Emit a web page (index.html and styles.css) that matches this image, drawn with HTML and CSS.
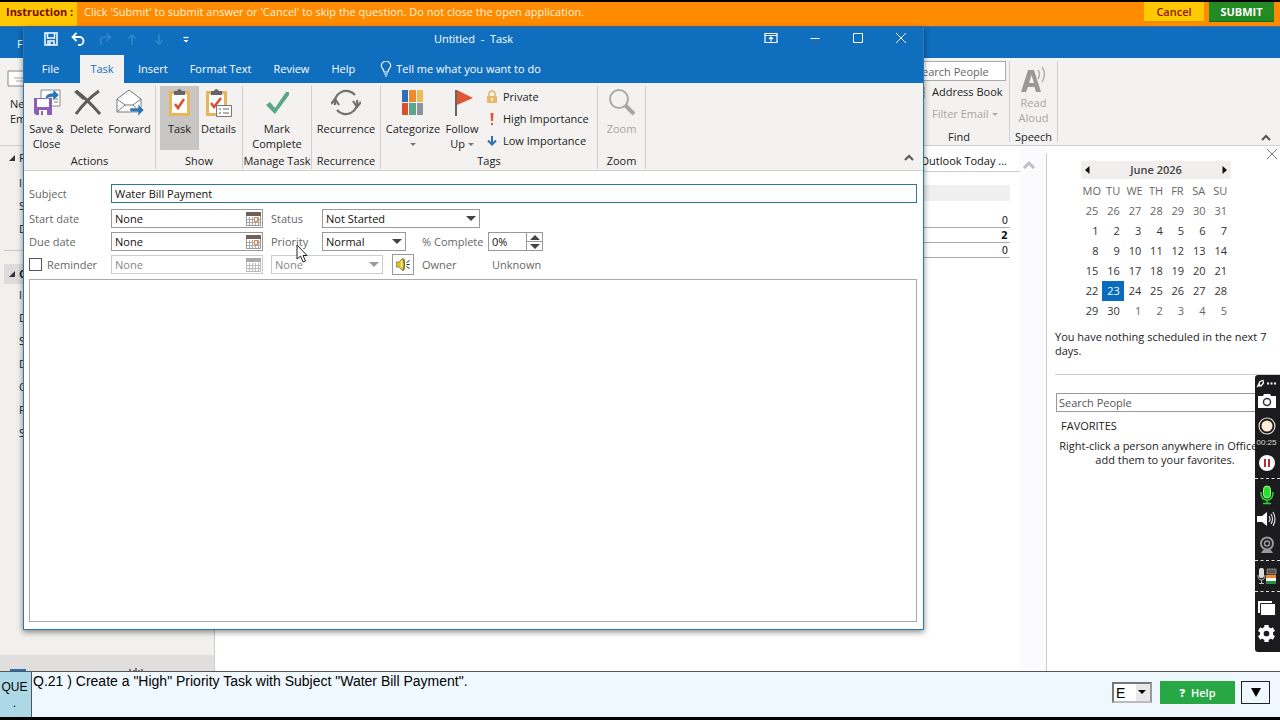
FILE: index.html
```html
<!DOCTYPE html>
<html lang="en">
<head>
<meta charset="utf-8">
<title>Untitled - Task</title>
<link rel="stylesheet" href="styles.css">
</head>
<body>
<header class="exam-bar">
  <strong class="exam-label">Instruction :</strong>
  <span class="exam-text">Click 'Submit' to submit answer or 'Cancel' to skip the question. Do not close the open application.</span>
  <button class="exam-cancel">Cancel</button>
  <button class="exam-submit">SUBMIT</button>
</header>

<main class="stage">
  <div class="outlook">
    <div class="outlook-title"><span>F</span></div>
    <div class="outlook-ribbon">
      <div class="new-mail">
        <svg width="22" height="18" viewBox="0 0 22 18"><path d="M1 1h21v15H1z" fill="#fff" stroke="#888"/><path d="M7 8h12M9 11h10" stroke="#aaa"/></svg>
        <span>Ne</span><span>Em</span>
      </div>
      <div class="find-group">
        <input class="people-box" type="text" aria-label="Find people" value="earch People">
        <button class="find-line"><svg width="12" height="12" viewBox="0 0 12 12"><path d="M-3 0h8v12H-3z" fill="#fff" stroke="#777"/><path d="M-2 3h6M-2 6h6M-2 9h6" stroke="#777"/><path d="M6.500 1v3" stroke="#d24726" stroke-width="2"/><path d="M6.500 5v3" stroke="#2b8a5a" stroke-width="2"/><path d="M6.500 9v3" stroke="#2b6cb5" stroke-width="2"/></svg>Address Book</button>
        <button class="find-line dim"><svg width="12" height="12" viewBox="0 0 12 12"><path d="M-4 1h10L2 6v6H0V6z" fill="#a8a8a8"/></svg>Filter Email<i class="caret"></i></button>
        <span class="group-name">Find</span>
      </div>
      <div class="speech-group">
        <svg width="30" height="32" viewBox="0 0 30 32"><path fill-rule="evenodd" d="M2 29 9 7h6l7 22h-5l-1.500-5H9l-2 5zM10 20h5L12.500 12z" fill="#999"/><path d="M19 7q3 4 0 9M23 4q5 7 0 15" fill="none" stroke="#b0b0b0" stroke-width="1.500"/></svg>
        <span class="dim">Read<br>Aloud</span>
        <span class="group-name">Speech</span>
      </div>
      <button class="collapse" aria-label="Collapse ribbon"><svg width="10" height="8" viewBox="0 0 10 8"><path d="M1 6l4-4 4 4" fill="none" stroke="#555" stroke-width="2"/></svg></button>
    </div>
    <div class="outlook-body">
      <nav class="folders">
        <div class="folder-head"><svg width="6" height="6" viewBox="0 0 6 6"><path d="M6 0v6H0z" fill="#333"/></svg>F</div>
        <ul><li>I</li><li>S</li><li>D</li></ul>
        <hr>
        <div class="folder-head picked"><svg width="6" height="6" viewBox="0 0 6 6"><path d="M6 0v6H0z" fill="#333"/></svg><b>C</b></div>
        <ul><li>I</li><li>D</li><li>S</li><li>D</li><li>C</li><li>R</li><li>S</li></ul>
        <div class="folder-foot">
          <svg width="16" height="3" viewBox="0 0 16 3"><path d="M0 3V1h16v2z" fill="#2b6cb5"/></svg>
          <svg width="14" height="3" viewBox="0 0 14 3"><path d="M1 3V1M5 3V2M7 3V0M10 3V2M13 3V1" stroke="#555" stroke-width="1.500"/></svg>
        </div>
      </nav>
      <section class="today">
        <div class="today-head">e Outlook Today ...</div>
        <div class="today-band"></div>
        <ol><li>0</li><li><b>2</b></li><li>0</li></ol>
      </section>
      <div class="scroll"><svg width="14" height="10" viewBox="0 0 14 10"><path d="M2 8l5-5 5 5" fill="none" stroke="#c0c0c0" stroke-width="3"/></svg></div>
      <aside class="todo">
        <button class="todo-close" aria-label="Close"><svg width="10" height="10" viewBox="0 0 10 10"><path d="M0 0l10 10M10 0L0 10" stroke="#777"/></svg></button>
        <div class="month">
          <button aria-label="Previous month"><svg width="5" height="8" viewBox="0 0 5 8"><path d="M4.500 0v8L0 4z" fill="#111"/></svg></button>
          <span>June 2026</span>
          <button aria-label="Next month"><svg width="5" height="8" viewBox="0 0 5 8"><path d="M.5 0v8L5 4z" fill="#111"/></svg></button>
        </div>
        <table class="days">
          <thead><tr><th>MO</th><th>TU</th><th>WE</th><th>TH</th><th>FR</th><th>SA</th><th>SU</th></tr></thead>
          <tbody>
            <tr class="off"><td>25</td><td>26</td><td>27</td><td>28</td><td>29</td><td>30</td><td>31</td></tr>
            <tr><td>1</td><td>2</td><td>3</td><td>4</td><td>5</td><td>6</td><td>7</td></tr>
            <tr><td>8</td><td>9</td><td>10</td><td>11</td><td>12</td><td>13</td><td>14</td></tr>
            <tr><td>15</td><td>16</td><td>17</td><td>18</td><td>19</td><td>20</td><td>21</td></tr>
            <tr><td>22</td><td class="now">23</td><td>24</td><td>25</td><td>26</td><td>27</td><td>28</td></tr>
            <tr><td>29</td><td>30</td><td class="off">1</td><td class="off">2</td><td class="off">3</td><td class="off">4</td><td class="off">5</td></tr>
          </tbody>
        </table>
        <p class="agenda">You have nothing scheduled in the next 7 days.</p>
        <div class="people">
          <input type="text" placeholder="Search People" aria-label="Search People">
          <h2>FAVORITES</h2>
          <p>Right-click a person anywhere in Office to<br>add them to your favorites.</p>
        </div>
      </aside>
    </div>
  </div>

  <section class="window">
    <div class="title-bar">
      <div class="quick">
        <button aria-label="Save"><svg width="14" height="14" viewBox="0 0 14 14"><path d="M1 1h12v12H1zM3.500 1v5h7V1M4 13V9h6v4M6 10v3" fill="none" stroke="#fff" stroke-width="1.500"/></svg></button>
        <button aria-label="Undo"><svg width="14" height="14" viewBox="0 0 14 14"><path d="M5.500 1L1.500 5l4 4M2 5h6.500a4 4 0 0 1 0 8H7" fill="none" stroke="#fff" stroke-width="1.800"/></svg></button>
        <button aria-label="Redo"><svg width="14" height="14" viewBox="0 0 14 14"><path d="M8.500 1l4 4-4 4M12 5H5.500a4 4 0 0 0-1 7.500" fill="none" stroke="#3585cf" stroke-width="1.500"/></svg></button>
        <button aria-label="Previous item"><svg width="14" height="14" viewBox="0 0 14 14"><path d="M7 13V3M3.500 6.500L7 3l3.500 3.500" fill="none" stroke="#3585cf" stroke-width="1.500"/></svg></button>
        <button aria-label="Next item"><svg width="14" height="14" viewBox="0 0 14 14"><path d="M7 2v10M3.500 8.500L7 12l3.500-3.500" fill="none" stroke="#3585cf" stroke-width="1.500"/></svg></button>
        <button aria-label="Customize"><svg width="14" height="14" viewBox="0 0 14 14"><path d="M4.500 5.500h5" stroke="#fff" stroke-width="1.200"/><path d="M4.500 8h5L7 10.500z" fill="#fff"/></svg></button>
      </div>
      <h1>Untitled&nbsp; -&nbsp; Task</h1>
      <div class="sys">
        <button aria-label="Ribbon options"><svg width="14" height="12" viewBox="0 0 14 12"><path d="M1 1.500h12v9H1zM1 3.500h12M7 9.500V5M5 7l2-2 2 2" fill="none" stroke="#fff" stroke-width="1.200"/></svg></button>
        <button aria-label="Minimize"><svg width="12" height="12" viewBox="0 0 12 12"><path d="M1.500 6.500h9" stroke="#fff"/></svg></button>
        <button aria-label="Maximize"><svg width="12" height="12" viewBox="0 0 12 12"><path d="M1.500 1.500h9v9h-9z" fill="none" stroke="#fff"/></svg></button>
        <button aria-label="Close window"><svg width="12" height="12" viewBox="0 0 12 12"><path d="M1 1l10 10M11 1L1 11" stroke="#fff"/></svg></button>
      </div>
    </div>
    <nav class="tabs">
      <button class="tab-file">File</button><button class="active">Task</button><button>Insert</button><button>Format Text</button><button>Review</button><button>Help</button>
      <button class="tell"><svg width="12" height="16" viewBox="0 0 12 16"><path d="M4 11Q4 9 2.500 7.500a4.500 4.500 0 1 1 7 0Q8 9 8 11zM4 13h4M5 15h2" fill="none" stroke="#fff" stroke-width="1.100"/></svg>Tell me what you want to do</button>
    </nav>
    <div class="ribbon">
      <div class="group g-actions"><div class="cmds">
        <button><svg width="30" height="30" viewBox="-1 0 30 30"><path d="M8 2h19v16H8z" fill="#fff" stroke="#888"/><path d="M21 8h4M21 11h4M21 14h4" stroke="#777"/><path d="M1 10h18v17H3l-2-2z" fill="#8a5fb5"/><path d="M4 11h12v8H4zM6 22h8v5H6z" fill="#fff"/><path d="M8 23h2v4H8z" fill="#8a5fb5"/><path d="M12 12q0-7 8-7V1l6 6-6 6V9q-5 0-8 3z" fill="#2e75b6" stroke="#fff" stroke-width=".5"/></svg>Save &amp;<br>Close</button>
        <button><svg width="30" height="30" viewBox="0 0 30 30"><path d="M4 3q10 7 24 23M27 3Q14 12 4 26" fill="none" stroke="#5d5d5d" stroke-width="3"/><path d="M2 4l3-2 8 8-2 2z" fill="#5d5d5d"/></svg>Delete</button>
        <button><svg width="30" height="30" viewBox="0 0 30 30"><path d="M2 11L14 2l12 9v13H2z" fill="#fff" stroke="#777"/><path d="M2 11l8 6h8l8-6M2 24l8-7M18 17l8 7" fill="none" stroke="#777"/><path d="M15 20h8v-4l6 6-6 6v-4h-8z" fill="#2e75b6" stroke="#f3f2f1" stroke-width=".6"/></svg>Forward</button>
      </div><span>Actions</span></div>
      <div class="group g-show"><div class="cmds">
        <button class="pressed"><svg width="30" height="30" viewBox="1 0 30 30"><path d="M6.500 4.500h18v22h-18z" fill="#fff" stroke="#e8b65a" stroke-width="3"/><path d="M10 3h3q2-4 5 0h3v4H10z" fill="#666"/><path d="M11 16l3 4 6-9" fill="none" stroke="#d9512c" stroke-width="2.500"/></svg>Task</button>
        <button><svg width="30" height="30" viewBox="1 0 30 30"><path d="M4.500 4.500h18v22h-18z" fill="#fff" stroke="#e8b65a" stroke-width="3"/><path d="M8 3h3q2-4 5 0h3v4H8z" fill="#666"/><path d="M8 15l3 4 7-9" fill="none" stroke="#d9512c" stroke-width="2.500"/><path d="M13.500 17.500h15v11h-15z" fill="#fff" stroke="#777"/><path d="M16 21h2M20 21h6M16 25h2M20 25h6" stroke="#666"/></svg>Details</button>
      </div><span>Show</span></div>
      <div class="group g-manage"><div class="cmds">
        <button><svg width="30" height="30" viewBox="0 0 30 30"><path d="M4 17l4-3 5 6L24 4h3v3L13 26z" fill="#5ba58b"/></svg>Mark<br>Complete</button>
      </div><span>Manage Task</span></div>
      <div class="group g-recur"><div class="cmds">
        <button><svg width="30" height="30" viewBox="0 0 30 30"><path d="M4 17A11.500 11.500 0 0 1 24 7M26 12A11.500 11.500 0 0 1 6 22" fill="none" stroke="#707070" stroke-width="2.200"/><path d="M0 16l4-5 4 6M30 14l-4 5-4-6" fill="none" stroke="#707070" stroke-width="2.200"/></svg>Recurrence</button>
      </div><span>Recurrence</span></div>
      <div class="group g-tags"><div class="cmds">
        <button><svg width="30" height="30" viewBox="1 0 30 30"><path d="M5 2h6v12H5z" fill="#2e6fb5"/><path d="M12 2h7v12h-7z" fill="#ec8a2d"/><path d="M20 2h6v12h-6z" fill="#edbc57"/><path d="M5 15h6v12H5z" fill="#d9512c"/><path d="M12 15h7v12h-7z" fill="#5ba58b"/><path d="M20 15h6v12h-6z" fill="#8b949c"/></svg>Categorize<br><i class="caret"></i></button>
        <button><svg width="30" height="30" viewBox="0 0 30 30"><path d="M9 2v26" stroke="#666" stroke-width="2"/><path d="M10 2l16 8-16 7z" fill="#de5633"/></svg>Follow<br>Up <i class="caret"></i></button>
        <div class="tag-list">
          <button><svg width="12" height="14" viewBox="0 0 12 14"><path d="M3 6V4q0-3 3-3t3 3v2" fill="none" stroke="#e3c080" stroke-width="1.800"/><path d="M1 6h10v7H1z" fill="#e8b966"/><path d="M6 8v3" stroke="#fff" stroke-width="1.500"/></svg>Private</button>
          <button><svg width="12" height="14" viewBox="0 0 12 14"><path d="M4.500 1h3L7 9H5zM5 11h2v2H5z" fill="#de5633"/></svg>High Importance</button>
          <button><svg width="12" height="14" viewBox="0 0 12 14"><path d="M6 2v8M2 6.500l4 4 4-4" fill="none" stroke="#2e6fb5" stroke-width="2"/></svg>Low Importance</button>
        </div>
      </div><span>Tags</span></div>
      <div class="group g-zoom"><div class="cmds">
        <button class="dim"><svg width="30" height="30" viewBox="0 0 30 30"><circle cx="12" cy="11" r="9" fill="none" stroke="#aaa" stroke-width="2"/><path d="M18 17l9 9" stroke="#a5a5a5" stroke-width="4"/></svg>Zoom</button>
      </div><span>Zoom</span></div>
      <button class="collapse" aria-label="Collapse ribbon"><svg width="10" height="8" viewBox="0 0 10 8"><path d="M1 6l4-4 4 4" fill="none" stroke="#555" stroke-width="2"/></svg></button>
    </div>
    <form class="task-form">
      <div class="row">
        <label class="lead" for="subject">Subject</label>
        <div class="subject"><input id="subject" type="text" value="Water Bill Payment"></div>
      </div>
      <div class="row">
        <label class="lead" for="start">Start date</label>
        <div class="date"><input id="start" type="text" value="None"><svg width="15" height="14" viewBox="0 0 15 14"><path d="M.5.5h14v13H.5z" fill="#fff" stroke="#999"/><path d="M0 0h15v4H0z" fill="#705f5a"/><path d="M3.500 5v8M6.500 5v8M9.500 5v8M12.500 5v8M1 7.500h13M1 10.500h13" stroke="#aaa"/><path d="M8.500 5.500h3v4h-3z" fill="#fff" stroke="#d98040"/></svg></div>
        <label class="mid" for="status">Status</label>
        <div class="pick w-status"><select id="status"><option>Not Started</option></select></div>
      </div>
      <div class="row">
        <label class="lead" for="due">Due date</label>
        <div class="date"><input id="due" type="text" value="None"><svg width="15" height="14" viewBox="0 0 15 14"><path d="M.5.5h14v13H.5z" fill="#fff" stroke="#999"/><path d="M0 0h15v4H0z" fill="#705f5a"/><path d="M3.500 5v8M6.500 5v8M9.500 5v8M12.500 5v8M1 7.500h13M1 10.500h13" stroke="#aaa"/><path d="M8.500 5.500h3v4h-3z" fill="#fff" stroke="#d98040"/></svg></div>
        <label class="mid" for="priority">Priority</label>
        <div class="pick w-priority"><select id="priority"><option>Normal</option></select></div>
        <label class="percent" for="complete">% Complete</label>
        <div class="spin"><input id="complete" type="text" value="0%"><div><button type="button" aria-label="Increase"><svg width="10" height="5" viewBox="0 0 10 5"><path d="M0 5h10L5 0z" fill="#444"/></svg></button><button type="button" aria-label="Decrease"><svg width="10" height="5" viewBox="0 0 10 5"><path d="M0 0h10L5 5z" fill="#444"/></svg></button></div></div>
      </div>
      <div class="row">
        <label class="lead remind"><input type="checkbox">Reminder</label>
        <div class="date faded"><input type="text" value="None" aria-label="Reminder date" disabled><svg width="15" height="14" viewBox="0 0 15 14"><path d="M.5.5h14v13H.5z" fill="#fff" stroke="#bbb"/><path d="M0 0h15v4H0z" fill="#aaa"/><path d="M3.500 5v8M6.500 5v8M9.500 5v8M12.500 5v8M1 7.500h13M1 10.500h13" stroke="#bbb"/></svg></div>
        <div class="pick w-time faded"><select aria-label="Reminder time" disabled><option>None</option></select></div>
        <button type="button" class="sound" aria-label="Reminder sound"><svg width="14" height="13" viewBox="0 0 14 13"><path d="M0 4h3l4-4q3 6 0 13L3 9H0z" fill="#d6c02e" stroke="#8a7a2a" stroke-width=".8"/><path d="M5.500 3v7" stroke="#f6ec9a" stroke-width="1.500"/><path d="M8 1q1 5 0 11" fill="none" stroke="#675b18"/><path d="M10.500 6.500h3M10.500 4.500l3-2M10.500 8.500l3 2" stroke="#222"/></svg></button>
        <span class="owner">Owner</span><span>Unknown</span>
      </div>
      <textarea aria-label="Task notes"></textarea>
    </form>
  </section>

  <svg class="cursor" width="12" height="19" viewBox="0 0 12 19"><path d="M1 1v14l3.500-3 2.500 6 2.500-1L7 11.500h4z" fill="#fff" stroke="#222"/></svg>

  <aside class="recorder">
    <svg width="21" height="9" viewBox="0 0 21 9"><path d="M2 6.500l2-4 3-1 .5 2.500-2.500 3zM1 8l3-3" fill="none" stroke="#fff" stroke-width="1.300"/><path d="M11 4.500h2M14.500 4.500h2M18 4.500h2" stroke="#fff" stroke-width="2"/></svg>
    <svg width="20" height="16" viewBox="0 0 20 16"><path d="M1 3h5l1-2h6l1 2h5v12H1z" fill="#fff"/><circle cx="10" cy="9" r="3.500" fill="#fff" stroke="#333" stroke-width="1.500"/></svg>
    <svg class="rec" width="18" height="18" viewBox="0 0 18 18"><circle cx="9" cy="9" r="8" fill="none" stroke="#e9ddd0" stroke-width="1.200"/><circle cx="9" cy="9" r="5.500" fill="#ffeed9"/></svg>
    <span>00:25</span>
    <svg class="pause" width="16" height="16" viewBox="0 0 16 16"><circle cx="8" cy="8" r="8" fill="#fff"/><path d="M6 4v8M10 4v8" stroke="#b52d3c" stroke-width="2"/></svg>
    <hr>
    <svg class="mic" width="16" height="20" viewBox="0 0 16 20"><rect x="4.500" y="1" width="7" height="12" rx="3.500" fill="#28e02c" stroke="#a9ff9e"/><path d="M2 7q0 8 6 8t6-8M8 15v3M4 18.500h8" fill="none" stroke="#28d62c" stroke-width="1.500"/></svg>
    <svg class="spk" width="19" height="16" viewBox="0 0 19 16"><path d="M0 5h5l5-4v14l-5-4H0z" fill="#fff"/><path d="M12 5q2 3 0 6M14 3q3 5 0 10M16 1q4 7 0 14" fill="none" stroke="#ddd" stroke-width="1.200"/></svg>
    <svg class="cam" width="16" height="18" viewBox="0 0 16 18"><circle cx="8" cy="7.500" r="6" fill="none" stroke="#999" stroke-width="2"/><circle cx="8" cy="7.500" r="2.500" fill="none" stroke="#999" stroke-width="1.500"/><path d="M4 14h8l2 3H2z" fill="#999"/></svg>
    <hr>
    <svg class="lang" width="20" height="16" viewBox="0 0 20 16"><rect x="2" y="0" width="5" height="10" rx="2" fill="#ddd"/><path d="M1 7q0 5 3.500 5T8 7M4.500 12v3M2 15.500h5" fill="none" stroke="#bbb"/><path d="M10 1h9v5h-9z" fill="#555" stroke="#aaa" stroke-width=".7"/><path d="M9 7h10v3H9z" fill="#f28c28"/><path d="M9 10h10v3H9z" fill="#fff"/><path d="M9 13h10v3H9z" fill="#27943a"/></svg>
    <hr>
    <svg class="copies" width="19" height="16" viewBox="0 0 19 16"><path d="M1 1h14v12H1z" fill="#fff"/><path d="M3.500 3.500h15v12h-15z" fill="#fff" stroke="#222"/></svg>
    <svg width="19" height="19" viewBox="0 0 20 20"><circle cx="10" cy="10" r="5" fill="none" stroke="#fff" stroke-width="4"/><path d="M10 1v4M10 15v4M2.200 5.500l3.500 2M14.300 12.500l3.500 2M2.200 14.500l3.500-2M14.300 7.500l3.500-2" stroke="#fff" stroke-width="4.500"/></svg>
  </aside>
</main>

<footer class="question">
  <div class="que">QUE<br>.</div>
  <p>Q.21 ) Create a "High" Priority Task with Subject "Water Bill Payment".</p>
  <div class="lang-pick"><select aria-label="Language"><option>E</option></select></div>
  <button class="help"><b>?</b>Help</button>
  <button class="drop" aria-label="Collapse question"><svg width="10" height="9" viewBox="0 0 10 9"><path d="M0 0h10L5 9z" fill="#000"/></svg></button>
</footer>
</body>
</html>
```
FILE: styles.css
```css
* { box-sizing: border-box; margin: 0; }
body {
  display: flex; flex-direction: column; min-height: 100vh;
  border-top: 2px solid #000; border-bottom: 3px solid #000;
  font: 11px/14px "Open Sans", "Noto Sans", sans-serif; color: #222;
}
button { border: 0; padding: 0; background: none; font: inherit; color: inherit; }
input, select, textarea { font: inherit; color: inherit; border-radius: 0; }
svg { display: block; flex: none; }
ul, ol { list-style: none; padding: 0; }
.dim { color: #a6a6a6; }
.caret { display: inline-block; border: 3px solid transparent; border-top-color: #777; border-bottom: 0; vertical-align: 2px; }

/* Exam bar */
.exam-bar { display: flex; height: 24px; background: #ff8c00; color: #fff1dc; }
.exam-label { width: 77px; padding: 3px 0 0 6px; background: #ffc800; color: #7b0a0a; }
.exam-text { flex: 1; padding: 3px 0 0 7px; }
.exam-cancel { width: 60px; height: 20px; background: #ffc800; color: #8b1a0a; font-weight: 600; border-bottom: 1px solid #d39a00; }
.exam-submit { width: 65px; height: 20px; margin: 0 6px 0 5px; background: #228b22; color: #fff; font-weight: 700; border-bottom: 1px solid #14661a; }

.stage { position: relative; flex: 1; display: flex; flex-direction: column; }

/* Outlook behind the task window */
.outlook { flex: 1; display: flex; flex-direction: column; }
.outlook-title { height: 32px; padding: 10px 0 0 17px; background: #106ebe; border-top: 1px solid #57688a; color: #fff; }
.outlook-ribbon { display: flex; justify-content: flex-end; height: 88px; background: #f3f2f1; border-bottom: 1px solid #d2d0ce; }
.new-mail { display: flex; flex-direction: column; gap: 1px; width: 32px; padding: 12px 0 0 7px; margin-right: auto; }
.new-mail svg { margin-bottom: 8px; }
.new-mail span { padding-left: 3px; }
.find-group { width: 92px; display: flex; flex-direction: column; }
.people-box { width: 89px; height: 20px; margin-top: 3px; padding: 0 4px; border: 1px solid #aaa; color: #666; }
.find-line { display: flex; align-items: center; gap: 3px; height: 22px; color: #222; white-space: nowrap; }
.find-line.dim { color: #a6a6a6; }
.find-line .caret { border-top-color: #aaa; }
.group-name { margin-top: auto; padding-bottom: 1px; text-align: center; color: #222; }
.find-group .group-name { padding: 0 14px 1px 6px; }
.speech-group { width: 49px; margin: 3px 0; border: solid #d2d0ce; border-width: 0 1px; display: flex; flex-direction: column; align-items: center; line-height: 15px; text-align: center; }
.speech-group svg { margin-top: 2px; }
.speech-group .group-name { margin-bottom: -3px; }
.outlook-ribbon .collapse { width: 221px; padding: 73px 9px 0 0; margin-left: 1px; }
.collapse svg { margin-left: auto; }
.outlook-body { flex: 1; display: flex; }
.folders { width: 215px; background: #f1f0ed; border-right: 1px solid #ccc; display: flex; flex-direction: column; line-height: 22px; }
.folders li { height: 23px; padding-left: 19px; }
.folders hr { margin: 9px 4px 13px; border: 0; border-top: 1px solid #ccc; }
.folder-head { display: flex; align-items: center; gap: 4px; height: 20px; padding-left: 9px; margin-top: 2px; }
.folder-head + ul { margin-top: 4px; }
.picked { margin: 0 4px; padding-left: 5px; background: #dcdcdc; }
.picked + ul { margin-top: 0; }
.folder-foot { display: flex; gap: 103px; align-items: flex-end; height: 16px; margin-top: auto; padding-left: 10px; background: #e1dfdd; }
.today { flex: 1; text-align: right; font-family: "DejaVu Sans Condensed", "DejaVu Sans", sans-serif; color: #111; }
.today-head { padding: 8px 13px 3px; border-bottom: 1px solid #ccc; font-family: "Open Sans", sans-serif; }
.today-band { height: 16px; margin: 13px 10px 12px 0; background: #efefef; }
.today li { height: 15px; margin-right: 10px; padding-right: 2px; border-bottom: 1px solid #aaa; line-height: 15px; }
.scroll { width: 26px; padding: 14px 0 0 2px; background: #fbfafc; }
.todo { width: 234px; border-left: 1px solid #ccc; background: #fff; margin-top: 7px; padding-left: 8px; }
.todo-close { display: block; margin: -4px 3px 0 auto; }
.month { display: flex; justify-content: space-between; align-items: center; width: 150px; height: 18px; margin: 2px 0 2px 26px; padding: 0 4px; background: #f0efee; font-weight: 600; color: #444; }
.days { width: 150px; margin-left: 26px; table-layout: fixed; border-collapse: collapse; color: #333; }
.days th, .days td { height: 20px; padding: 0; text-align: center; font-weight: 400; }
.days td { text-align: right; padding-right: 4px; }
.days th, .off { color: #666; }
.days .now { background: #0a6cbd; color: #fff; }
.agenda { padding: 9px 12px 16px 0; border-bottom: 1px solid #ccc; }
.people { padding: 18px 0 0 1px; }
.people input { display: block; width: 100%; height: 19px; padding: 0 2px; border: 1px solid #999; }
.people input::placeholder { color: #555; opacity: 1; }
.people h2 { padding: 7px 5px 6px; font-size: 11px; line-height: 14px; font-weight: 400; }
.people p { width: 218px; text-align: center; white-space: nowrap; }

/* Task window */
.window { position: absolute; left: 23px; right: 356px; top: 1px; bottom: 41px; display: flex; flex-direction: column; background: #fff; border: 1px solid #2a7ab8; border-top: 0; box-shadow: 0 2px 6px #0007; }
.title-bar { display: grid; grid-template-columns: 1fr auto 1fr; align-items: center; height: 28px; background: #106ebe; color: #fff; }
.title-bar h1 { font-size: 11px; line-height: 14px; font-weight: 400; padding-bottom: 5px; }
.quick { display: flex; gap: 13px; padding: 0 0 5px 20px; }
.sys { display: flex; justify-content: flex-end; gap: 31px; padding: 0 16px 7px 0; }
.tabs { display: flex; height: 28px; background: #106ebe; color: #fff; }
.tabs button { padding: 0 11px; }
.tabs .tab-file { width: 56px; padding: 0 3px 0 0; }
.tabs .active { width: 44px; padding: 0; margin-right: 3px; background: #f3f2f1; color: #106ebe; }
.tabs .tell { display: flex; align-items: center; gap: 4px; padding: 0 14px; }
.ribbon { display: flex; height: 88px; padding: 3px 9px 1px 0; background: #f3f2f1; border-bottom: 1px solid #d2d0ce; line-height: 15px; text-align: center; color: #222; }
.group { display: flex; flex-direction: column; justify-content: space-between; align-items: center; border-right: 1px solid #d2d0ce; white-space: nowrap; }
.group > span { line-height: 14px; padding-bottom: 1px; }
.cmds { display: flex; align-items: flex-start; }
.cmds button { padding-top: 2px; }
.cmds button > svg { margin: 0 auto 3px; }
.g-actions { width: 132px; }
.g-actions button:nth-child(1) { width: 39px; }
.g-actions button:nth-child(2) { width: 41px; }
.g-actions button:nth-child(3) { width: 45px; }
.g-show { width: 87px; }
.g-show button { width: 39px; }
.g-manage, .g-recur { width: 69px; }
.g-tags { width: 217px; }
.g-tags button:nth-child(1) { width: 58px; }
.g-tags button:nth-child(2) { width: 40px; }
.g-zoom { width: 48px; }
.ribbon .pressed { padding-bottom: 14px; background: #c8c6c4; }
.ribbon .dim { color: #a6a6a6; }
.ribbon .collapse { margin-left: auto; padding-top: 60px; }
.cmds .tag-list { display: flex; flex-direction: column; gap: 1px; width: 112px; }
.cmds .tag-list button { display: flex; align-items: center; gap: 5px; width: 100%; height: 21px; padding: 0 0 0 4px; }
.cmds .tag-list svg { margin: 0; }

/* Task form */
.task-form { flex: 1; display: flex; flex-direction: column; gap: 4px; padding: 13px 6px 7px 5px; color: #666; }
.row { display: flex; align-items: center; height: 19px; }
.row:first-child { margin-bottom: 2px; }
.lead { width: 82px; }
.remind { display: flex; align-items: center; gap: 5px; }
.remind input { appearance: none; width: 13px; height: 13px; border: 1px solid #555; background: #fff; }
.subject { flex: 1; display: flex; border: 1px solid #2f7596; height: 19px; padding-left: 3px; color: #111; }
.subject input { flex: 1; border: 0; padding: 0; outline: 0; background: none; }
.date { display: flex; align-items: center; width: 152px; height: 19px; padding: 0 1px 0 3px; border: 1px solid #999; color: #111; }
.date input { flex: 1; min-width: 0; padding: 0; border: 0; background: none; }
.mid { width: 59px; padding-left: 8px; }
.pick { position: relative; height: 19px; border: 1px solid #999; color: #111; }
.pick::after { content: ""; position: absolute; right: 3px; top: 6px; border: 5px solid transparent; border-top-color: #444; border-bottom: 0; pointer-events: none; }
.pick select { appearance: none; width: 100%; height: 100%; padding: 0 3px; border: 0; background: none; opacity: 1; }
.w-status { width: 158px; }
.w-priority { width: 84px; }
.w-time { width: 112px; margin-left: 8px; }
.faded { color: #888; border-color: #ccc; }
.faded::after { border-top-color: #999; }
.percent { width: 82px; padding-left: 16px; }
.spin { display: flex; width: 55px; height: 19px; border: 1px solid #999; color: #111; }
.spin input { width: 37px; padding: 0 3px; border: 0; }
.spin div { flex: 1; display: flex; flex-direction: column; border-left: 1px solid #999; }
.spin button { flex: 1; display: flex; align-items: center; justify-content: center; }
.spin button + button { border-top: 1px solid #999; }
.sound { display: flex; align-items: center; justify-content: center; width: 22px; height: 21px; margin-left: 9px; border: 1px solid #999; }
.owner { width: 78px; padding-left: 8px; }
.task-form textarea { flex: 1; margin-top: 1px; border: 1px solid #aaa; resize: none; }
.cursor { position: absolute; left: 296px; top: 218px; }

/* Screen recorder strip */
.recorder { position: absolute; right: 0; top: 349px; width: 25px; padding: 4px 2px 9px 0; display: flex; flex-direction: column; align-items: center; gap: 5px; background: #1b1b1d; border-radius: 3px 0 0 3px; color: #ddd; }
.recorder span { font: 8px/8px "Liberation Sans", Arial, sans-serif; margin-top: -1px; }
.recorder hr { width: 25px; margin-right: -2px; border: 0; border-top: 1px dashed #ddd; }
.rec { margin-top: 3px; }
.pause { margin: 3px 0 2px; }
.mic { margin: 1px 0; }
.cam { margin: 4px 0 1px; }
.lang { margin: 2px 0; }
.copies { margin: 3px 0; }

/* Question bar */
.question { display: flex; align-items: center; height: 46px; border-top: 1px solid #555; background: #f0f8ff; font-family: "Liberation Sans", Arial, sans-serif; color: #000; }
.que { align-self: stretch; width: 32px; padding: 7px 2px 0 0; border-right: 1px solid #555; background: #add8e6; text-align: center; font-size: 12px; line-height: 16px; }
.question p { flex: 1; align-self: flex-start; padding-left: 1px; font-size: 14px; line-height: 18px; }
.lang-pick { position: relative; width: 40px; height: 21px; margin-bottom: 4px; border: 2px solid #777; border-right-color: #999; border-bottom-color: #bbb; background: linear-gradient(90deg, #fff 22px, #e8e8e8 22px); }
.lang-pick::after { content: ""; position: absolute; right: 4px; top: 6px; border: 4px solid transparent; border-top-color: #000; border-bottom: 0; pointer-events: none; }
.lang-pick select { appearance: none; display: block; width: 100%; height: 100%; padding: 0 2px; border: 0; background: none; font-size: 14px; line-height: 16px; }
.help { width: 75px; height: 23px; margin: 0 6px 4px 8px; background: #28a745; color: #fff; font: 600 11px/14px "Open Sans", sans-serif; }
.help b { margin-right: 6px; }
.drop { display: flex; align-items: center; justify-content: center; width: 29px; height: 23px; margin: 0 10px 4px 0; border: 1px solid #222; background: #f0f8ff; }
```
